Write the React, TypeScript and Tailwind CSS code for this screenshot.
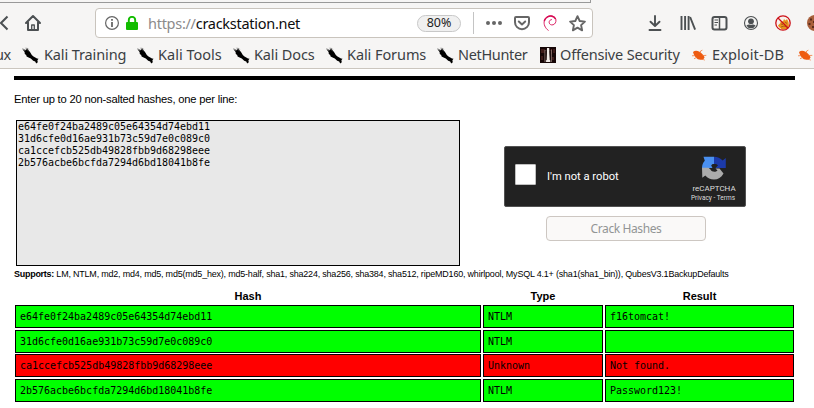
import React from "react";

const UI = "font-['Noto_Sans','Open_Sans',sans-serif]";

function Knife() {
  return (
    <svg width="17" height="17" viewBox="0 0 17 17" className="shrink-0">
      <path d="M.5 2.300L3 3.600 5.200 1.800 8 5 9.800 8 11.500 9.600 15 11.500 16.500 11.700 15.400 13.200 15.800 15.200 14.200 16.400 13.200 14.600 11.200 13.800 8.800 11.500 6.600 10.600 4.600 9.400 4.200 8 2.800 7 2.600 5Z" fill="#000" />
      <path d="M.3 1.800L3.400 3M3.600.8L6.800 4.400M5 .8l1.600 1.600" stroke="#555" strokeWidth=".7" fill="none" />
    </svg>
  );
}

function OffSec() {
  return (
    <svg width="16" height="16" viewBox="0 0 16 16" className="shrink-0">
      <path d="M0 0h16v16H0z" fill="#160606" />
      <path d="M2 2v4M4 2v4M11.500 2v5M14 2v4M2 9v4M13 10v3" stroke="#66302c" strokeWidth="1" />
      <path d="M7 1h2.200l.3 6 .8 8H6l.8-8z" fill="#f2ece8" />
      <path d="M4.500 3h1v12h-1zM10.800 3h1v12h-1z" fill="#8a7570" />
      <path d="M5.600 4h1v9h-1zM9.700 4h1v9h-1z" fill="#160606" />
    </svg>
  );
}

function Bug() {
  return (
    <svg width="16" height="16" viewBox="0 0 16 16" className="shrink-0">
      <path d="M2 5C4.500 2.600 8.500 3.800 12 7.700L13.600 10.300 12.200 12.800 9.400 12.800C5.800 12.600 3.400 9.800 2 5Z" fill="#ee5b10" />
      <path d="M9 6.200L9.600 4l1.800-.8M11.500 8.500L15.300 8.400M4 8.600L1 8.800M5.500 10.500L3 11.800M12.500 11.500l.8 2" stroke="#f1793b" strokeWidth=".8" fill="none" />
    </svg>
  );
}

const bookmarks = [
  { t: "Kali Training", box: "w-[115px] gap-[5px]", sp: "tracking-[-0.12px]", icon: <Knife /> },
  { t: "Kali Tools", box: "w-[96px] gap-1", sp: "tracking-[0.02px]", icon: <Knife /> },
  { t: "Kali Docs", box: "w-[93px] gap-1", sp: "tracking-[-0.12px]", icon: <Knife /> },
  { t: "Kali Forums", box: "w-[111px] gap-1", sp: "tracking-[-0.08px]", icon: <Knife /> },
  { t: "NetHunter", box: "w-[103px] gap-1", sp: "tracking-[-0.35px]", icon: <Knife /> },
  { t: "Offensive Security", box: "w-[151px] gap-1", sp: "tracking-[-0.18px]", icon: <OffSec /> },
  { t: "Exploit-DB", box: "w-[106px] gap-[5px]", sp: "tracking-[0.12px]", icon: <Bug /> },
];

function AddressBar() {
  return (
    <div className="ml-[53px] flex h-[30px] w-[498px] shrink-0 items-center rounded-[4px] border border-[#c9c4bd] bg-white">
      <svg width="16" height="16" viewBox="0 0 16 16" className="ml-2 shrink-0">
        <circle cx="8" cy="8" r="6.400" fill="none" stroke="#666" strokeWidth="1.200" />
        <path d="M8 4v1.800M8 7v5" stroke="#666" strokeWidth="1.800" />
      </svg>
      <svg width="12" height="14" viewBox="0 0 12 14" className="ml-[6px] shrink-0">
        <rect y="6" width="12" height="8" rx="1" fill="#12bc00" />
        <path d="M2.800 7V4a3.200 3.200 0 0 1 6.400 0v3" fill="none" stroke="#12bc00" strokeWidth="1.900" />
      </svg>
      <span className="ml-[10px] w-[269px] shrink-0 whitespace-nowrap text-[14.500px] leading-5 tracking-[-0.280px] text-[#0c0c0d]">
        <span className="text-[#8b8b8b]">https://</span>crackstation.net
      </span>
      <span className="flex h-[17px] w-[44px] shrink-0 items-center justify-center rounded-full border border-[#c8c8c8] bg-[#f0f0f0] text-[12.500px] text-[#222]">80%</span>
      <span className="ml-3 h-[22px] w-px shrink-0 bg-[#c4c4c4]" />
      <svg width="16" height="16" viewBox="0 0 16 16" className="ml-3 shrink-0" fill="#666">
        <circle cx="2" cy="8" r="2" /><circle cx="8" cy="8" r="2" /><circle cx="14" cy="8" r="2" />
      </svg>
      <svg width="16" height="16" viewBox="0 0 16 16" className="ml-3 shrink-0" fill="none" stroke="#666" strokeWidth="2" strokeLinecap="round" strokeLinejoin="round">
        <path d="M2 2h12a1 1 0 0 1 1 1v4.200a7 7 0 0 1-14 0V3a1 1 0 0 1 1-1z" />
        <path d="M4.800 6.500L8 9.400l3.200-2.900" />
      </svg>
      <svg width="16" height="16" viewBox="0 0 16 16" className="ml-3 shrink-0" fill="none" stroke="#d70a53" strokeLinecap="round">
        <path d="M6.200 15.300C3 13 1.500 9.200 2.300 5.800 3.100 2.400 6.500.5 9.800.9c2.900.5 4.600 2.900 4.100 5.500-.4 2.200-2.200 3.800-4.300 3.500-1.800-.3-2.700-1.600-2.400-3.200.3-1.300 1.300-2 2.300-2.100" strokeWidth=".9" />
        <path d="M2.500 5.400C3.700 2.400 7 .6 10 1.200c1.600.4 2.700 1.300 3.300 2.500" strokeWidth="1.500" />
      </svg>
      <svg width="17" height="17" viewBox="0 0 17 17" className="ml-[11px] shrink-0" fill="none" stroke="#666" strokeWidth="1.900" strokeLinejoin="round">
        <path d="M8.500 1.200l2.200 4.800 5.200.6-3.800 3.500 1 5.200-4.600-2.600-4.600 2.600 1-5.200L1.100 6.600l5.200-.6z" />
      </svg>
    </div>
  );
}

function ToolbarIcons() {
  return (
    <>
      <svg width="14" height="16" viewBox="0 0 14 16" className="ml-[55px] shrink-0" fill="none" stroke="#4c5052" strokeWidth="1.900" strokeLinecap="round" strokeLinejoin="round">
        <path d="M7 1v9.500M2.500 6.700L7 11l4.500-4.300M1.500 15h11" />
      </svg>
      <svg width="16" height="16" viewBox="0 0 16 16" className="ml-[18px] shrink-0" fill="none" stroke="#4c5052" strokeWidth="1.900">
        <path d="M1.500 1v14M5.100 1v14M8.600 1v14" /><path d="M10.100 2l5 12.600" />
      </svg>
      <svg width="17" height="16" viewBox="0 0 17 16" className="ml-[15px] shrink-0" fill="none" stroke="#4c5052">
        <rect x="1.500" y="2" width="14" height="12.500" rx="2" strokeWidth="2" />
        <path d="M8.500 2v12" strokeWidth="1.500" /><path d="M3.500 5h3.500M3.500 7.500h3.500M3.500 10h2.500" />
      </svg>
      <svg width="16" height="16" viewBox="0 0 16 16" className="ml-[15px] shrink-0">
        <circle cx="8" cy="8" r="6.500" fill="none" stroke="#4c5052" strokeWidth="1.100" />
        <circle cx="8" cy="6.300" r="2.900" fill="#4c5052" />
        <path d="M3.400 10.500c1-.7 2.200-1 3.100-.9.900.5 2.100.5 3 0 .9-.1 2.100.2 3.100.9A5.200 5.200 0 0 1 8 13.300 5.200 5.200 0 0 1 3.400 10.500z" fill="#4c5052" />
      </svg>
      <svg width="16" height="16" viewBox="0 0 16 16" className="ml-4 shrink-0">
        <circle cx="8" cy="8" r="7.200" fill="#f8f2ed" />
        <path d="M3 10.500L5 8.500 6 6l2 .5L9 4l1.500 1.500L12 4l1.500 3 .5 4-2 3-5 .5L4 12z" fill="#e8921c" />
        <path d="M6 9l2 .5M10 7l2 1.500M6 12l3-1 3 1" stroke="#a95b16" fill="none" />
        <circle cx="8" cy="8" r="7.200" fill="none" stroke="#cc1118" strokeWidth="1.300" />
        <path d="M3 3l10 10" stroke="#cc1118" strokeWidth="1.300" />
      </svg>
      <svg width="16" height="16" viewBox="0 0 16 16" className="ml-4 shrink-0">
        <circle cx="8" cy="8" r="8" fill="#a85f3b" />
        <path d="M3 3.500h2v2H3zM1.500 8h2v2h-2zM5 11h2v2H5zM6 6h2v2H6z" fill="#5b2c1b" />
      </svg>
    </>
  );
}

function Captcha() {
  return (
    <div className="flex h-[61px] w-[242px] items-center rounded-[2px] border border-[#525252] bg-[#222] font-[Roboto,sans-serif] text-white">
      <span className="mb-[4px] ml-[10px] h-[21px] w-[21px] shrink-0 rounded-[1px] border border-[#c1c1c1] bg-white" />
      <span className="ml-[11px] w-[139px] shrink-0 pt-px text-[11.200px]">I&apos;m not a robot</span>
      <div className="flex w-[56px] shrink-0 flex-col items-center pt-[5px]">
        <svg width="24" height="24" viewBox="0 0 24 24">
          <path d="M0 12C0 9.200 1 6.800 2.800 4.800L1.500.8H12V8C10.500 7.800 9.600 8.500 9.200 9.500L10.500 12H6.500V12Z" fill="#4a90f0" />
          <path d="M12 .8C15.500.8 18.500 2.200 20.600 4.500L23.800 2V12H13.500L16 9.300C15 8.200 13.800 7.900 12 8Z" fill="#1c3aa9" />
          <path d="M0 11.800H6.500L8.500 13.500C9.500 16 13.500 16.600 15.500 14.500L13.500 12.500H17.500L21.500 17.500C19.300 21.500 16 23.500 12 23.500 8.500 23.500 5.500 22 3.300 19.500L.3 21.800Z" fill="#ababab" />
        </svg>
        <span className="mt-[4px] text-[8px] leading-[10px] text-[#ddd]">reCAPTCHA</span>
        <span className="whitespace-nowrap pr-[2px] text-[6.500px] leading-[9px] text-[#ddd]">Privacy - Terms</span>
      </div>
    </div>
  );
}

const results = [
  { hash: "e64fe0f24ba2489c05e64354d74ebd11", type: "NTLM", result: "f16tomcat!", row: "mb-[2px]", color: "bg-[#00ff00]" },
  { hash: "31d6cfe0d16ae931b73c59d7e0c089c0", type: "NTLM", result: "", row: "mb-px", color: "bg-[#00ff00]" },
  { hash: "ca1ccefcb525db49828fbb9d68298eee", type: "Unknown", result: "Not found.", row: "mb-[2px]", color: "bg-[#ff0000]" },
  { hash: "2b576acbe6bcfda7294d6bd18041b8fe", type: "NTLM", result: "Password123!", row: "", color: "bg-[#00ff00]" },
];

const columns = "grid grid-cols-[466px_120px_189px] gap-x-[2px]";

export default function App() {
  return (
    <div className="h-[408px] w-[814px] overflow-hidden bg-white font-['Liberation_Sans',Arial,sans-serif] text-black">
      <header className={`flex h-[69px] flex-col border-b border-[#cbc6bf] bg-[#f6f5f4] ${UI}`}>
        <div className="h-[3px] w-[591px] shrink-0 border-b border-r border-[#999]" />
        <div className="mt-[5px] flex h-[30px] shrink-0 items-center">
          <svg width="9" height="16" viewBox="0 0 9 16" className="shrink-0" fill="none" stroke="#4c5052" strokeWidth="2">
            <path d="M7.500 1.500L1 8l6.500 6.500" />
          </svg>
          <svg width="18" height="18" viewBox="0 0 18 18" className="ml-[15px] shrink-0" fill="none" stroke="#4c5052" strokeWidth="2" strokeLinejoin="round" strokeLinecap="round">
            <path d="M2 9l7-7 7 7M4 8.500V16h10V8.500" />
            <path d="M7.700 16v-5h2.600v5" strokeWidth="1.300" />
          </svg>
          <AddressBar />
          <ToolbarIcons />
        </div>
        <nav className="flex h-[34px] shrink-0 items-center whitespace-nowrap text-[14.500px] text-[#3b4043]">
          <span className="flex w-[22px] shrink-0">
            <span className="-ml-[5px] tracking-[-0.350px]">ux</span>
          </span>
          {bookmarks.map((b) => (
            <div key={b.t} className={`flex shrink-0 items-center ${b.box}`}>
              {b.icon}
              <span className={b.sp}>{b.t}</span>
            </div>
          ))}
          <Bug />
        </nav>
      </header>

      <main className="ml-[14px] mt-[7px] w-[781px]">
        <div className="h-1 bg-black" />
        <p className="mt-[12px] h-[14px] text-[11.200px] leading-[14px] tracking-[-0.200px]">Enter up to 20 non-salted hashes, one per line:</p>
        <div className="mt-[14px] flex">
          <pre className="ml-[2px] h-[146px] w-[444px] shrink-0 border border-black bg-[#e8e8e8] pl-px font-['DejaVu_Sans_Mono',monospace] text-[10px] leading-3 tracking-[-0.020px]">
            {results.map((r) => r.hash).join("\n")}
          </pre>
          <div className="ml-[44px] flex flex-col items-center pt-[26px]">
            <Captcha />
            <button className={`ml-[2px] mt-[9px] h-[25px] w-[160px] rounded-[4px] border border-[#cdc7c2] bg-[#faf9f8] pt-px text-[12px] leading-none tracking-[-0.400px] text-[#929595] ${UI}`}>
              Crack Hashes
            </button>
          </div>
        </div>
        <p className="mt-[2px] h-3 whitespace-nowrap text-[8.960px] leading-3 tracking-[-0.186px]">
          <b className="tracking-[-0.250px]">Supports:</b> LM, NTLM, md2, md4, md5, md5(md5_hex), md5-half, sha1, sha224, sha256, sha384, sha512, ripeMD160, whirlpool, MySQL 4.1+ (sha1(sha1_bin)), QubesV3.1BackupDefaults
        </p>
        <div className="ml-px mt-[9px]">
          <div className={`${columns} h-4 text-center text-[11px] font-bold leading-[14px]`}>
            <span>Hash</span><span>Type</span><span>Result</span>
          </div>
          {results.map((r) => (
            <div key={r.hash} className={`${columns} ${r.row} font-['DejaVu_Sans_Mono',monospace] text-[10px] tracking-[-0.010px]`}>
              {[r.hash, r.type, r.result].map((v, i) => (
                <div key={i} className={`flex h-[23px] items-center border border-black pl-1 ${r.color}`}>{v}</div>
              ))}
            </div>
          ))}
        </div>
      </main>
    </div>
  );
}
